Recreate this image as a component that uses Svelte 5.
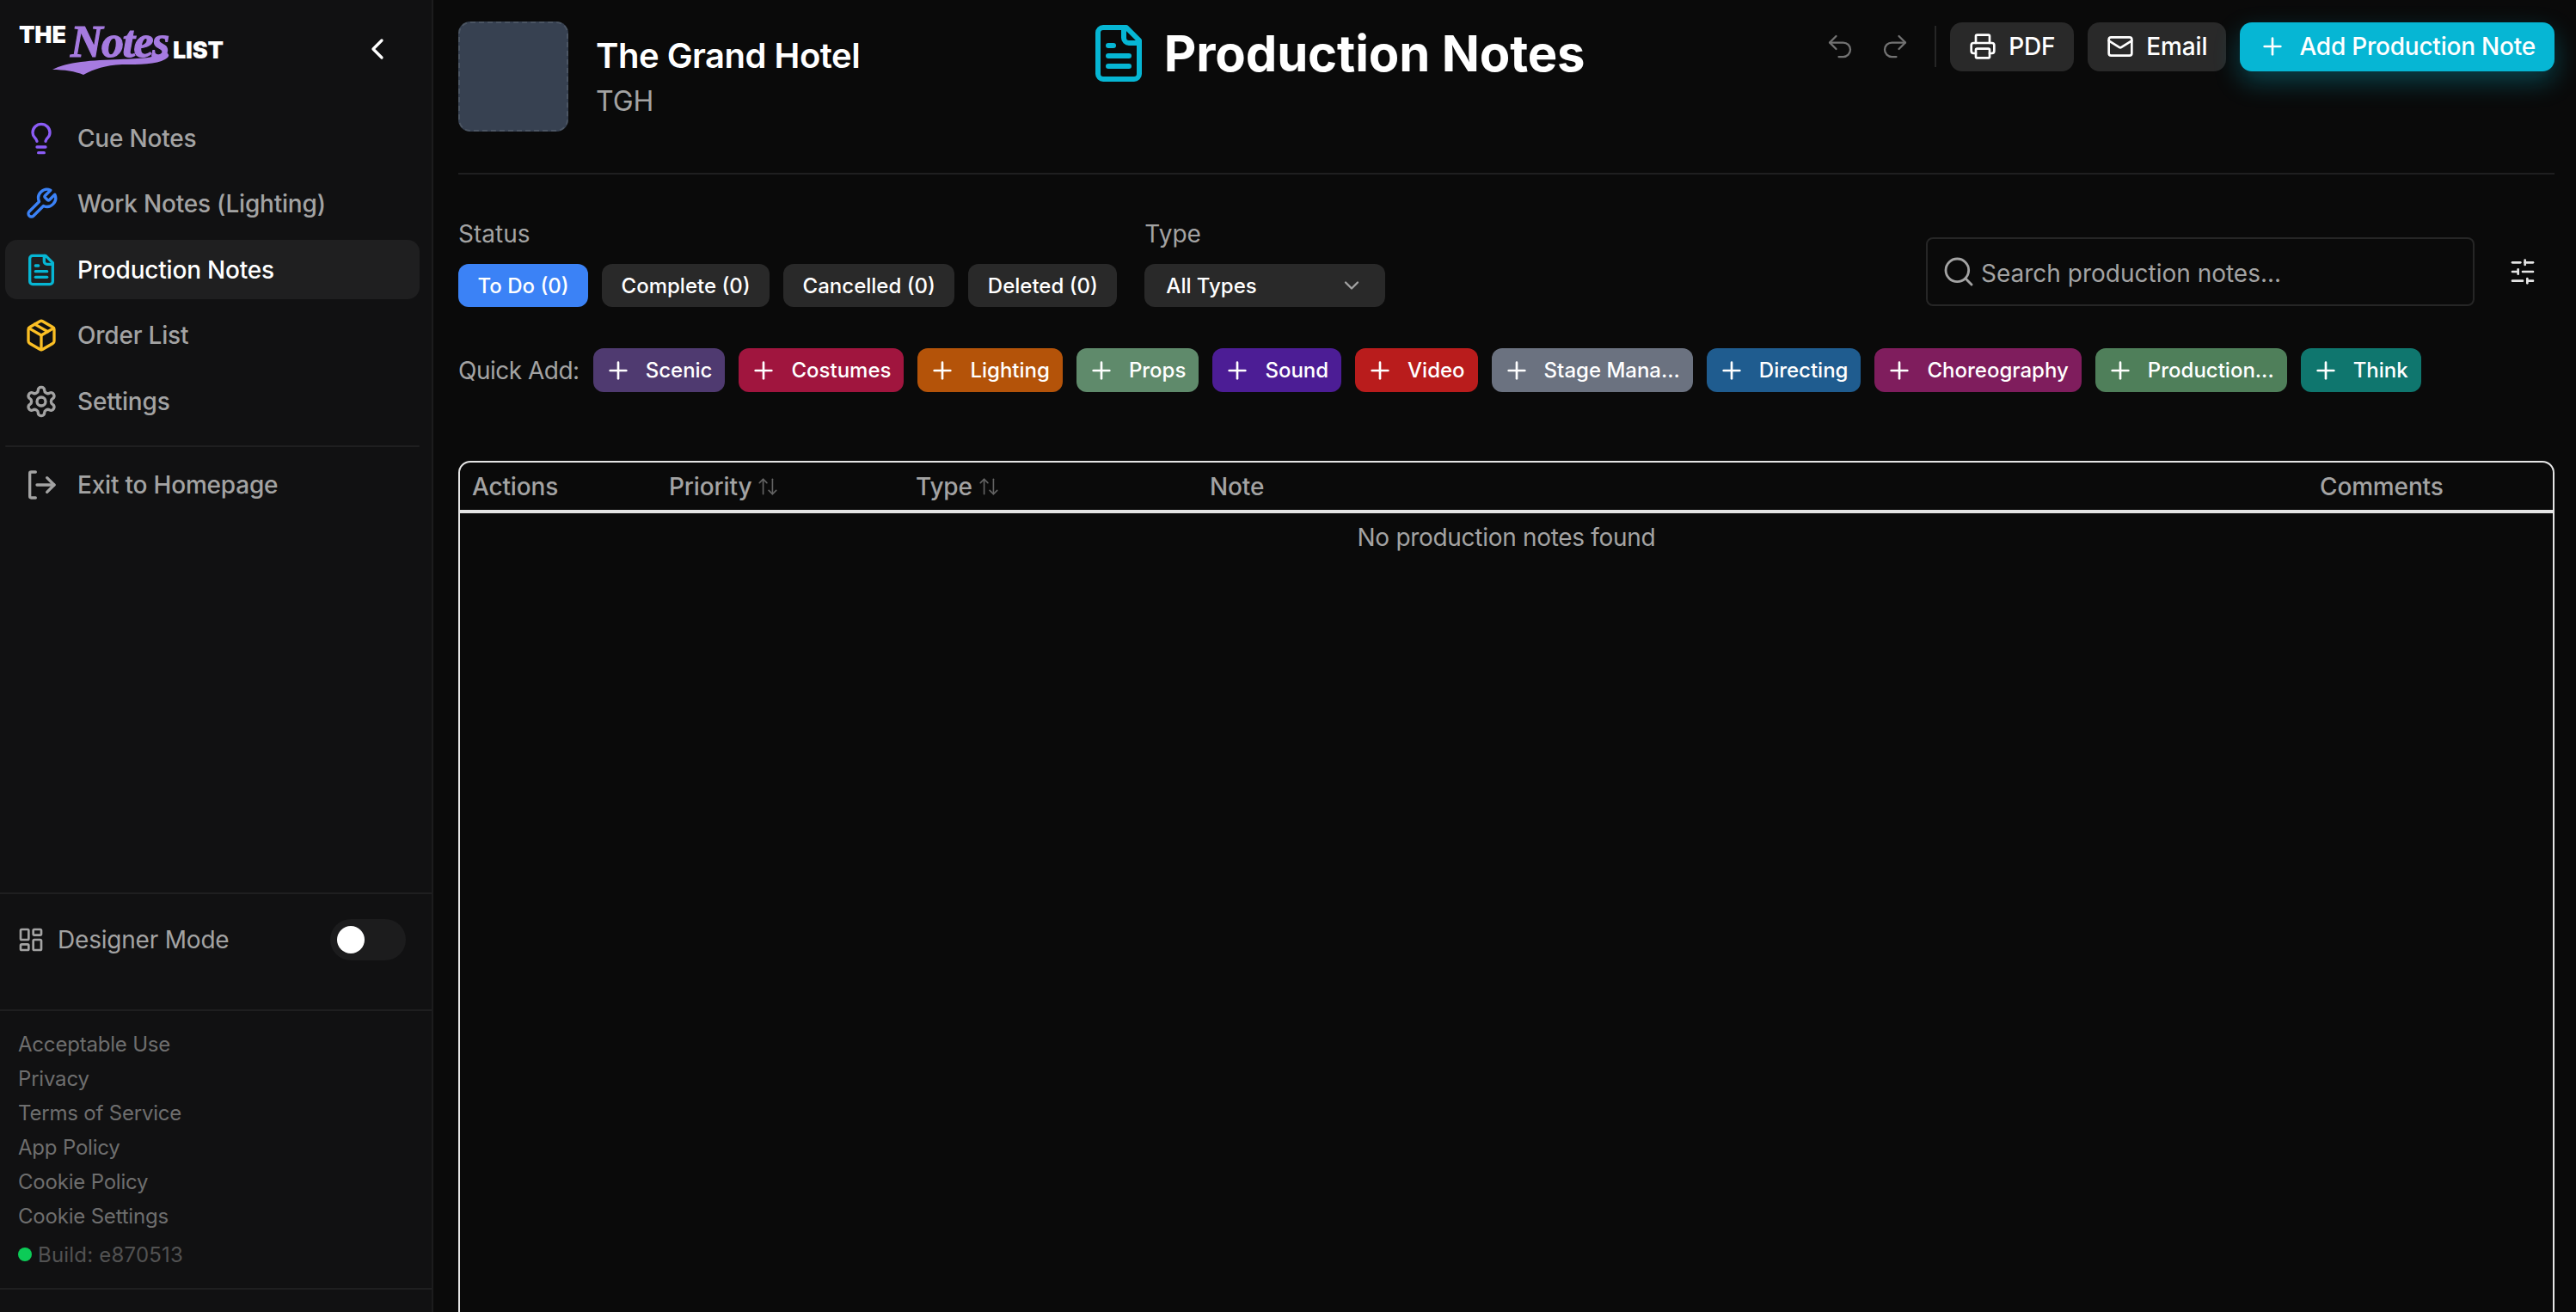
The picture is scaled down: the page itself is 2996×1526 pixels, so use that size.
<script>
  const filePaths = ['M15 2H6a2 2 0 0 0-2 2v16a2 2 0 0 0 2 2h12a2 2 0 0 0 2-2V7Z', 'M14 2v4a2 2 0 0 0 2 2h4', 'M10 9H8', 'M16 13H8', 'M16 17H8'];

  const navItems = [
    { label: 'Cue Notes', color: '#8b5cf6', paths: ['M15 14c.2-1 .7-1.7 1.5-2.5 1-.9 1.5-2.2 1.5-3.5A6 6 0 0 0 6 8c0 1 .2 2.2 1.5 3.5.7.7 1.3 1.5 1.5 2.5', 'M9 18h6', 'M10 22h4'] },
    { label: 'Work Notes (Lighting)', color: '#3b82f6', paths: ['M14.7 6.3a1 1 0 0 0 0 1.4l1.6 1.6a1 1 0 0 0 1.4 0l3.77-3.77a6 6 0 0 1-7.94 7.94l-6.91 6.91a2.12 2.12 0 0 1-3-3l6.91-6.91a6 6 0 0 1 7.94-7.94l-3.76 3.76z'] },
    { label: 'Production Notes', color: '#06b6d4', paths: filePaths, active: true },
    { label: 'Order List', color: '#fbbf24', paths: ['m7.5 4.27 9 5.15', 'M21 8a2 2 0 0 0-1-1.73l-7-4a2 2 0 0 0-2 0l-7 4A2 2 0 0 0 3 8v8a2 2 0 0 0 1 1.73l7 4a2 2 0 0 0 2 0l7-4A2 2 0 0 0 21 16Z', 'm3.3 7 8.7 5 8.7-5', 'M12 22V12'] },
    { label: 'Settings', color: '#a3a3a3', paths: ['M12.22 2h-.44a2 2 0 0 0-2 2v.18a2 2 0 0 1-1 1.73l-.43.25a2 2 0 0 1-2 0l-.15-.08a2 2 0 0 0-2.73.73l-.22.38a2 2 0 0 0 .73 2.73l.15.1a2 2 0 0 1 1 1.72v.51a2 2 0 0 1-1 1.74l-.15.09a2 2 0 0 0-.73 2.73l.22.38a2 2 0 0 0 2.73.73l.15-.08a2 2 0 0 1 2 0l.43.25a2 2 0 0 1 1 1.73V20a2 2 0 0 0 2 2h.44a2 2 0 0 0 2-2v-.18a2 2 0 0 1 1-1.73l.43-.25a2 2 0 0 1 2 0l.15.08a2 2 0 0 0 2.73-.73l.22-.39a2 2 0 0 0-.73-2.73l-.15-.08a2 2 0 0 1-1-1.74v-.5a2 2 0 0 1 1-1.74l.15-.09a2 2 0 0 0 .73-2.73l-.22-.38a2 2 0 0 0-2.73-.73l-.15.08a2 2 0 0 1-2 0l-.43-.25a2 2 0 0 1-1-1.73V4a2 2 0 0 0-2-2z', 'M15 12a3 3 0 1 1-6 0 3 3 0 0 1 6 0z'] }
  ];

  const legalLinks = ['Acceptable Use', 'Privacy', 'Terms of Service', 'App Policy', 'Cookie Policy', 'Cookie Settings'];
  const statuses = ['To Do (0)', 'Complete (0)', 'Cancelled (0)', 'Deleted (0)'];

  const quickAdd = [
    { label: 'Scenic', color: '#4f3a70' },
    { label: 'Costumes', color: '#a0153e' },
    { label: 'Lighting', color: '#b45309' },
    { label: 'Props', color: '#5f8a6b' },
    { label: 'Sound', color: '#4c1d95' },
    { label: 'Video', color: '#b91c1c' },
    { label: 'Stage Mana...', color: '#6b7280' },
    { label: 'Directing', color: '#1f5c8f' },
    { label: 'Choreography', color: '#7f1d5d' },
    { label: 'Production...', color: '#4f7f5a' },
    { label: 'Think', color: '#0f766e' }
  ];
</script>

{#snippet icon(paths, size = 32, stroke = 2)}
  <svg width={size} height={size} viewBox="0 0 24 24" fill="none" stroke="currentColor" stroke-width={stroke} stroke-linecap="round" stroke-linejoin="round">
    {#each paths as d}<path {d} />{/each}
  </svg>
{/snippet}

<div class="app">
  <aside class="sidebar">
    <div class="brand">
      <div class="logo">
        <span class="logo-word the">THE</span>
        <span class="logo-script">Notes</span>
        <span class="logo-word list">LIST</span>
        <svg class="swoosh" width="240" height="90" viewBox="0 0 240 90">
          <path d="M39 81 C55 72 85 70 118 69 C140 68 160 68 168 60 C176 62 176 66 170 69 C160 75 140 75 120 75 C100 76 88 80 75 87 C66 83 52 81 39 81Z" fill="#a67be0" />
        </svg>
      </div>
      <button class="collapse" aria-label="Collapse sidebar">
        {@render icon(['m15 18-6-6 6-6'], 40, 2)}
      </button>
    </div>

    <nav class="nav">
      {#each navItems as item}
        <a class="nav-item" class:active={item.active} href="#/">
          <span class="nav-icon" style="color: {item.color}">{@render icon(item.paths, 40, 2)}</span>
          {item.label}
        </a>
      {/each}
      <div class="nav-divider"></div>
      <a class="nav-item" href="#/">
        <span class="nav-icon" style="color: #a3a3a3">{@render icon(['M8 3H5a1 1 0 0 0-1 1v16a1 1 0 0 0 1 1h3', 'M9 12h12', 'm16 7 5 5-5 5'], 40, 2)}</span>
        Exit to Homepage
      </a>
    </nav>

    <div class="designer">
      <span class="designer-icon">
        <svg width="32" height="32" viewBox="0 0 24 24" fill="none" stroke="currentColor" stroke-width="2" stroke-linejoin="round">
          <rect x="3" y="3" width="7" height="9" rx="1" />
          <rect x="14" y="3" width="7" height="5" rx="1" />
          <rect x="14" y="12" width="7" height="9" rx="1" />
          <rect x="3" y="16" width="7" height="5" rx="1" />
        </svg>
      </span>
      <span class="designer-label">Designer Mode</span>
      <span class="toggle"><span class="knob"></span></span>
    </div>

    <div class="legal">
      {#each legalLinks as link}
        <a href="#/">{link}</a>
      {/each}
      <div class="build"><span class="dot"></span>Build: e870513</div>
    </div>
  </aside>

  <main class="main">
    <header class="header">
      <div class="venue">
        <div class="venue-image"></div>
        <div class="venue-text">
          <div class="venue-name">The Grand Hotel</div>
          <div class="venue-code">TGH</div>
        </div>
      </div>

      <h1 class="title">
        <span class="title-icon">{@render icon(filePaths, 72, 2)}</span>
        Production Notes
      </h1>

      <div class="actions">
        <button class="ghost" aria-label="Undo">{@render icon(['M9 14 4 9l5-5', 'M4 9h10.5a5.5 5.5 0 0 1 5.5 5.5a5.5 5.5 0 0 1-5.5 5.5H11'], 36, 1.5)}</button>
        <button class="ghost" aria-label="Redo">{@render icon(['m15 14 5-5-5-5', 'M20 9H9.5A5.5 5.5 0 0 0 4 14.5A5.5 5.5 0 0 0 9.5 20H13'], 36, 1.5)}</button>
        <span class="actions-divider"></span>
        <button class="action">
          <svg width="32" height="32" viewBox="0 0 24 24" fill="none" stroke="currentColor" stroke-width="2" stroke-linecap="round" stroke-linejoin="round">
            <path d="M6 18H4a2 2 0 0 1-2-2v-5a2 2 0 0 1 2-2h16a2 2 0 0 1 2 2v5a2 2 0 0 1-2 2h-2" />
            <path d="M6 9V3a1 1 0 0 1 1-1h10a1 1 0 0 1 1 1v6" />
            <rect x="6" y="14" width="12" height="8" rx="1" />
          </svg>
          PDF
        </button>
        <button class="action">
          <svg width="32" height="32" viewBox="0 0 24 24" fill="none" stroke="currentColor" stroke-width="2" stroke-linecap="round" stroke-linejoin="round">
            <rect x="2" y="4" width="20" height="16" rx="2" />
            <path d="m22 7-8.97 5.7a1.94 1.94 0 0 1-2.06 0L2 7" />
          </svg>
          Email
        </button>
        <button class="action primary">
          {@render icon(['M5 12h14', 'M12 5v14'], 32, 2)}
          Add Production Note
        </button>
      </div>
    </header>

    <section class="filters">
      <div class="filter-groups">
        <div class="filter-group">
          <div class="filter-label">Status</div>
          <div class="status-list">
            {#each statuses as status, i}
              <button class="status" class:current={i === 0}>{status}</button>
            {/each}
          </div>
        </div>
        <div class="filter-group">
          <div class="filter-label">Type</div>
          <button class="select">
            All Types
            <span class="select-chevron">{@render icon(['m6 9 6 6 6-6'], 28, 2)}</span>
          </button>
        </div>
      </div>

      <div class="search-row">
        <label class="search">
          <span class="search-icon">{@render icon(['M21 21l-4.3-4.3', 'M19 11a8 8 0 1 1-16 0 8 8 0 0 1 16 0z'], 40, 1.7)}</span>
          <input type="text" placeholder="Search production notes..." />
        </label>
        <button class="ghost settings" aria-label="Table options">
          {@render icon(['M21 4h-7', 'M10 4H3', 'M21 12h-9', 'M8 12H3', 'M21 20h-5', 'M12 20H3', 'M14 2v4', 'M8 10v4', 'M16 18v4'], 32, 2)}
        </button>
      </div>
    </section>

    <section class="quick-add">
      <span class="quick-label">Quick Add:</span>
      {#each quickAdd as item}
        <button class="pill" style="background: {item.color}">
          {@render icon(['M5 12h14', 'M12 5v14'], 32, 2)}
          {item.label}
        </button>
      {/each}
    </section>

    <section class="table">
      <div class="table-head">
        <div class="cell">Actions</div>
        <div class="cell">Priority <span class="sort">{@render icon(['m21 16-4 4-4-4', 'M17 20V4', 'm3 8 4-4 4 4', 'M7 4v16'], 26, 1.5)}</span></div>
        <div class="cell">Type <span class="sort">{@render icon(['m21 16-4 4-4-4', 'M17 20V4', 'm3 8 4-4 4 4', 'M7 4v16'], 26, 1.5)}</span></div>
        <div class="cell">Note</div>
        <div class="cell">Comments</div>
      </div>
      <div class="table-empty">No production notes found</div>
    </section>
  </main>
</div>

<style>
  :global(body) {
    margin: 0;
    background: #0a0a0a;
    overflow: hidden;
  }

  .app {
    display: flex;
    width: 2996px;
    height: 1526px;
    overflow: hidden;
    font-family: Inter, "Liberation Sans", sans-serif;
    color: #fff;
  }

  button {
    font: inherit;
    color: inherit;
    border: none;
    background: none;
    padding: 0;
  }

  /* sidebar */
  .sidebar {
    box-sizing: border-box;
    width: 504px;
    height: 1526px;
    flex: none;
    display: flex;
    flex-direction: column;
    background: #111112;
    border-right: 2px solid #1c1c1d;
    padding-bottom: 26px;
  }

  .brand {
    display: flex;
    flex: none;
    align-items: flex-start;
    justify-content: space-between;
    height: 126px;
    padding: 27px 43px 0 22px;
    box-sizing: border-box;
  }

  .logo {
    position: relative;
    width: 240px;
    height: 62px;
  }

  .logo-word {
    position: absolute;
    font-size: 27px;
    font-weight: 900;
    line-height: 1;
    letter-spacing: -0.2px;
  }

  .the { left: 0; top: 0; }
  .list { left: 179px; top: 18px; }

  .logo-script {
    position: absolute;
    left: 60px;
    top: -4px;
    font-family: "Liberation Serif", serif;
    font-style: italic;
    font-weight: 700;
    font-size: 52px;
    line-height: 1;
    letter-spacing: -1.5px;
    color: #a67be0;
    -webkit-text-stroke: 1.2px #a67be0;
  }

  .swoosh {
    position: absolute;
    left: 0;
    top: -27px;
  }

  .collapse {
    display: flex;
    margin-top: 10px;
  }

  .nav {
    display: flex;
    flex: none;
    flex-direction: column;
    gap: 7.6px;
    padding: 0 14px 0 6px;
  }

  .nav-item {
    display: flex;
    flex: none;
    align-items: center;
    gap: 22px;
    height: 69px;
    padding-left: 22px;
    border-radius: 14px;
    font-size: 28px;
    font-weight: 500;
    letter-spacing: -0.2px;
    color: #a3a3a3;
    text-decoration: none;
  }

  .nav-item.active {
    background: #1f1f20;
    color: #fff;
  }

  .nav-icon {
    display: flex;
  }

  .nav-divider {
    flex: none;
    height: 2px;
    background: #1f1f20;
    margin: 9px 0 2px;
    border-radius: 2px;
  }

  .designer {
    display: flex;
    flex: none;
    align-items: center;
    margin-top: auto;
    height: 136px;
    padding: 0 30px 28px 20px;
    box-sizing: border-box;
    border-top: 2px solid #1f1f20;
    color: #a3a3a3;
    font-size: 28px;
    letter-spacing: -0.2px;
  }

  .designer-icon {
    display: flex;
    margin-right: 15px;
  }

  .designer-label {
    flex: 1;
  }

  .toggle {
    display: flex;
    align-items: center;
    width: 88px;
    height: 48px;
    padding-left: 8px;
    box-sizing: border-box;
    border-radius: 24px;
    background: #1c1c1d;
  }

  .knob {
    width: 32px;
    height: 32px;
    border-radius: 50%;
    background: #fff;
  }

  .legal {
    display: flex;
    flex: none;
    flex-direction: column;
    padding: 19px 22px 24px 21px;
    height: 326px;
    box-sizing: border-box;
    border-top: 2px solid #1f1f20;
    border-bottom: 2px solid #1f1f20;
    font-size: 24px;
  }

  .legal a {
    height: 40px;
    line-height: 40px;
    color: #6e6e6e;
    letter-spacing: -0.2px;
    text-decoration: none;
  }

  .build {
    display: flex;
    align-items: center;
    gap: 7px;
    margin-top: 9px;
    height: 40px;
    letter-spacing: 0.2px;
    color: #525252;
  }

  .dot {
    flex: none;
    width: 16px;
    height: 16px;
    border-radius: 50%;
    background: #0ccb57;
  }

  /* main */
  .main {
    flex: 1;
    min-width: 0;
    display: flex;
    flex-direction: column;
    padding: 25px 25px 0 29px;
    background: #0a0a0a;
  }

  .header {
    display: flex;
    flex: none;
    align-items: flex-start;
    justify-content: space-between;
    height: 178px;
    box-sizing: border-box;
    border-bottom: 2px solid #1f1f20;
  }

  .venue {
    display: flex;
    align-items: center;
    gap: 32px;
  }

  .venue-image {
    width: 128px;
    height: 128px;
    box-sizing: border-box;
    border: 2px dashed #4b5563;
    border-radius: 14px;
    background: #374151;
  }

  .venue-name {
    font-size: 40px;
    font-weight: 600;
    line-height: 48px;
    letter-spacing: -0.5px;
  }

  .venue-code {
    margin-top: 9px;
    font-size: 32px;
    line-height: 40px;
    color: #a3a3a3;
  }

  .title {
    display: flex;
    align-items: center;
    gap: 17px;
    margin: 0;
    font-size: 58px;
    font-weight: 700;
    line-height: 72px;
    letter-spacing: -0.15px;
    transform: translateY(1px);
  }

  .title-icon {
    display: flex;
    color: #06b6d4;
  }

  .actions {
    display: flex;
    align-items: center;
    height: 58px;
  }

  .ghost {
    display: flex;
    align-items: center;
    justify-content: center;
    width: 64px;
    height: 58px;
    color: #737373;
  }

  .actions-divider {
    width: 2px;
    height: 48px;
    margin: 0 16px 0 14px;
    background: #262626;
  }

  .action {
    display: flex;
    align-items: center;
    gap: 14px;
    height: 57px;
    padding: 0 22px;
    margin-right: 16px;
    border-radius: 14px;
    background: #292929;
    font-size: 28px;
    font-weight: 500;
    letter-spacing: -0.15px;
  }

  .action.primary {
    margin-right: 0;
    gap: 15px;
    background: #06b6d4;
    box-shadow: 0 12px 30px rgba(6, 182, 212, 0.32);
    letter-spacing: -0.22px;
  }

  .filters {
    display: flex;
    flex: none;
    align-items: flex-end;
    justify-content: space-between;
    margin-top: 52px;
  }

  .filter-groups {
    display: flex;
    gap: 32px;
  }

  .filter-label {
    font-size: 28px;
    line-height: 34px;
    color: #a3a3a3;
    margin-bottom: 18px;
  }

  .status-list {
    display: flex;
    gap: 16px;
  }

  .status {
    height: 50px;
    padding: 0 22.5px;
    border-radius: 12px;
    background: #292929;
    font-size: 24px;
    font-weight: 500;
  }

  .status.current {
    background: #3b82f6;
  }

  .select {
    display: flex;
    align-items: center;
    justify-content: space-between;
    box-sizing: border-box;
    width: 280px;
    height: 50px;
    padding: 0 25px;
    border-radius: 12px;
    background: #292929;
    font-size: 24px;
    font-weight: 500;
  }

  .select-chevron {
    display: flex;
    color: #a3a3a3;
  }

  .search-row {
    display: flex;
    align-items: center;
    height: 80px;
    margin-bottom: 1px;
  }

  .search {
    display: flex;
    align-items: center;
    gap: 6px;
    box-sizing: border-box;
    width: 638px;
    height: 80px;
    padding: 0 16px;
    border: 2px solid #262626;
    border-radius: 8px;
    color: #a3a3a3;
  }

  .search-icon {
    display: flex;
  }

  .search input {
    flex: 1;
    min-width: 0;
    border: none;
    outline: none;
    background: none;
    padding: 3px 0 0;
    font: inherit;
    font-size: 28px;
    color: #fff;
  }

  .search input::placeholder {
    color: #a3a3a3;
  }

  .ghost.settings {
    width: 74px;
    margin-left: 19px;
    color: #e5e5e5;
  }

  .quick-add {
    display: flex;
    flex: none;
    align-items: center;
    gap: 16px;
    margin-top: 48px;
  }

  .quick-label {
    font-size: 28px;
    letter-spacing: -0.5px;
    color: #a3a3a3;
  }

  .pill {
    display: flex;
    align-items: center;
    gap: 16px;
    height: 51px;
    padding: 0 15px 0 13px;
    border-radius: 12px;
    font-size: 24px;
    font-weight: 500;
    white-space: nowrap;
  }

  .table {
    flex: none;
    height: 1040px;
    margin-top: 80px;
    box-sizing: border-box;
    border: 2px solid #e5e5e5;
    border-radius: 14px 14px 0 0;
  }

  .table-head {
    display: grid;
    grid-template-columns: 229px 287px 342px 1291px 1fr;
    height: 55px;
    border-bottom: 4px solid #e5e5e5;
    font-size: 28px;
    font-weight: 500;
    letter-spacing: -0.15px;
    color: #a3a3a3;
  }

  .cell {
    display: flex;
    align-items: center;
    gap: 6px;
    padding-left: 14px;
  }

  .sort {
    display: flex;
    color: #636363;
  }

  .table-empty {
    height: 56px;
    line-height: 56px;
    text-align: center;
    font-size: 28px;
    letter-spacing: -0.3px;
    color: #a3a3a3;
  }
</style>
